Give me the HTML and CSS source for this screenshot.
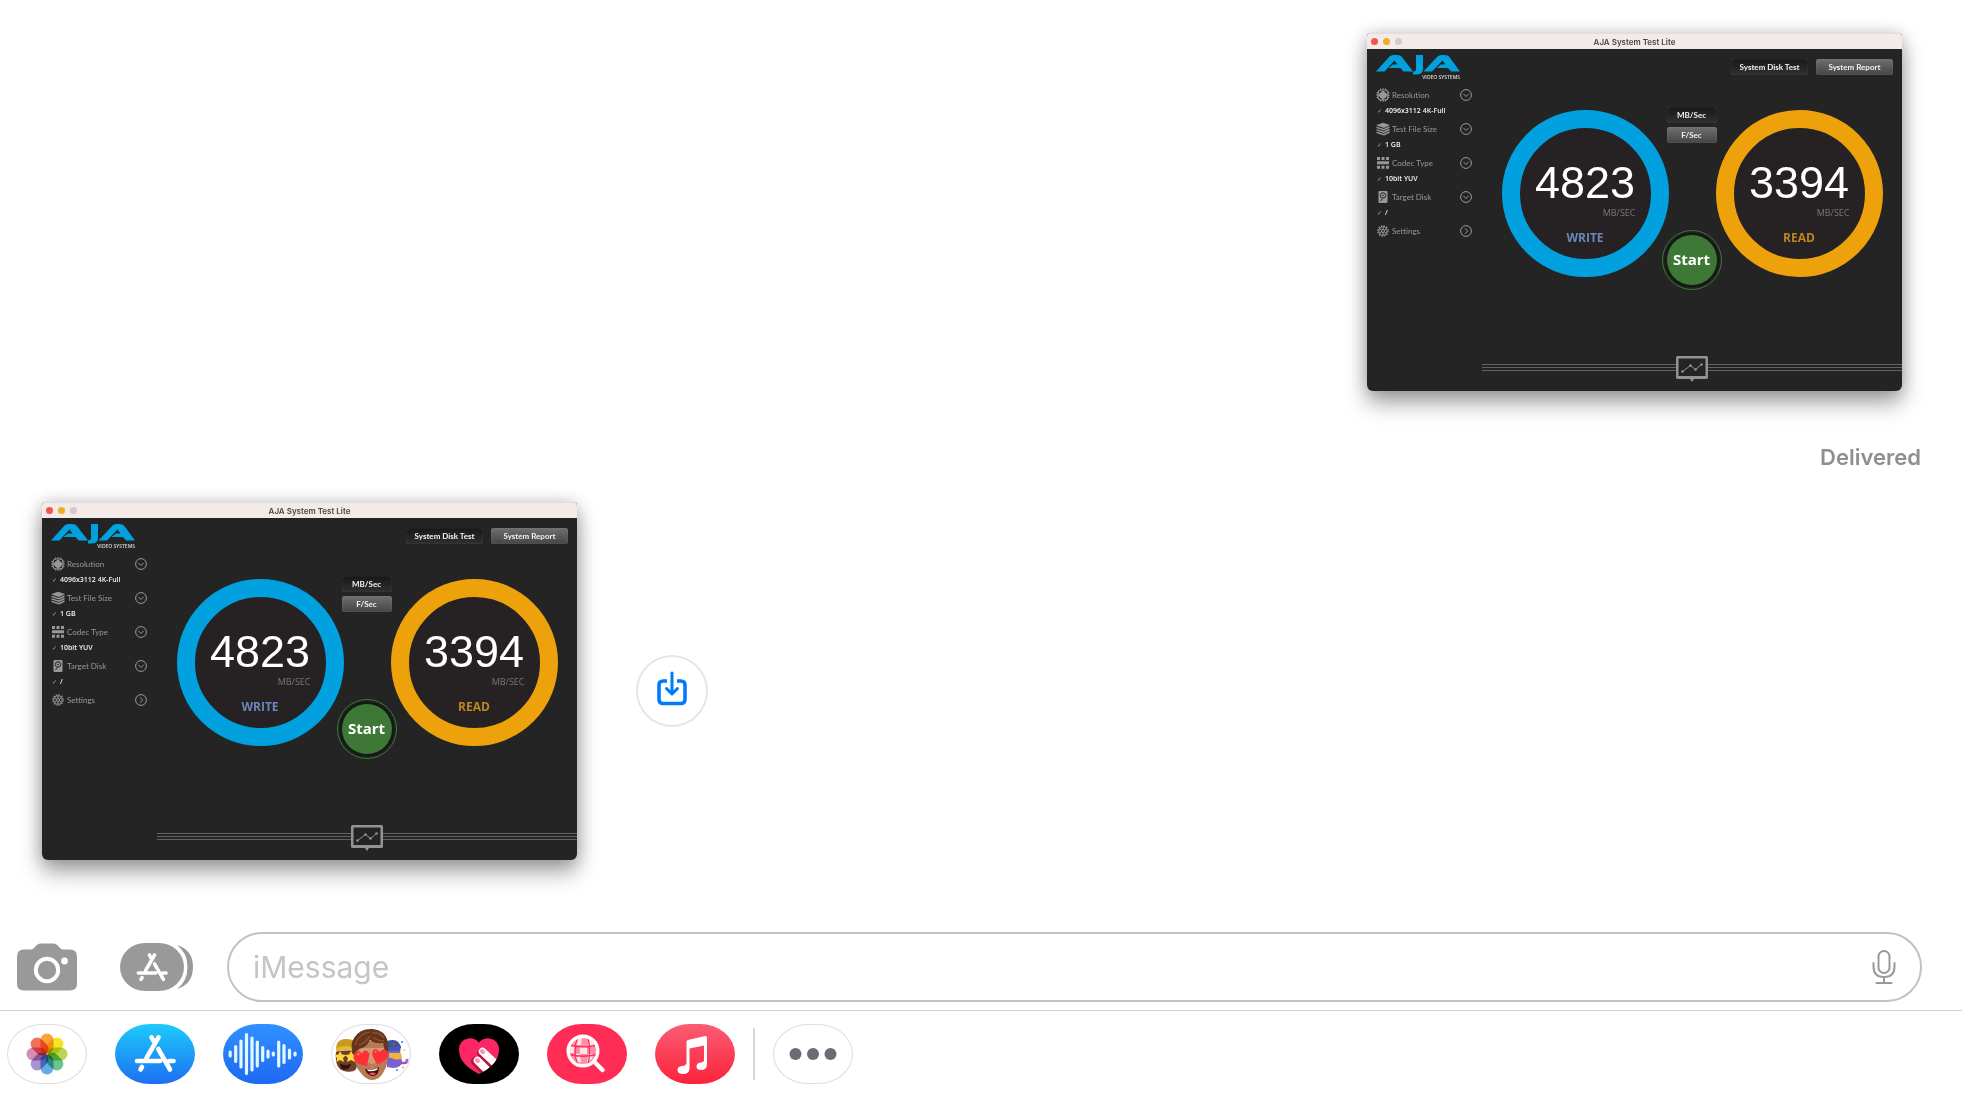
FILE: index.html
```html
<!DOCTYPE html>
<html lang="en">
<head>
<meta charset="utf-8">
<meta name="viewport" content="width=device-width, initial-scale=1">
<title>Messages</title>
<link rel="stylesheet" href="styles.css">
</head>
<body>
<svg class="defs" aria-hidden="true">
  <symbol id="aja" viewBox="0 0 84 20">
    <path d="M0 16.500 13.500 1.500Q15 0 17.500 0H21.500Q24 0 25.500 1.500L37 16.500H27.500L24.500 13H12.500L17 9.500H21.500L18.500 5.500 8.500 16.500ZM40 0H47V14Q47 19.500 40 19.500H37V16.500Q40 16.500 40 14ZM47.500 16.500 61.500 1.500Q63 0 65.500 0H69Q71.500 0 73 1.500L84 16.500H75L72 13H60.500L65 9.500H69.500L66.500 5.500 56 16.500Z"/>
  </symbol>
  <symbol id="down" viewBox="0 0 12 12"><circle cx="6" cy="6" r="5.400"/><path d="M3.300 4.800 6 7.500 8.700 4.800"/></symbol>
  <symbol id="right" viewBox="0 0 12 12"><circle cx="6" cy="6" r="5.400"/><path d="M5 3.300 7.700 6 5 8.700"/></symbol>
  <symbol id="res" viewBox="0 0 14 14"><rect x="2" y="2" width="10" height="10" rx="3" fill="none" stroke="currentColor" stroke-width="1.200"/><path fill="none" stroke="currentColor" stroke-width=".9" d="M4.500 .5V2M7 0V2M9.500 .5V2M4.500 12v1.500M7 12v2M9.500 12v1.500M.5 4.500H2M0 7H2M.5 9.500H2M12 4.500h1.500M12 7h2M12 9.500h1.500"/><path fill="currentColor" d="M5.500 3h3v1.500H10V5.500h1.500v3H10V10H8.500v1.500h-3V10H4V8.500H2.500v-3H4V4.500h1.500Z"/></symbol>
  <symbol id="files" viewBox="0 0 14 14"><path fill="currentColor" d="M7 .8 14 3 8 6 0 3.200Z"/><path fill="none" stroke="currentColor" stroke-width="1.400" d="M.5 5.300 8 7.700 13.500 5M.5 7.800 8 10.200 13.500 7.500M.5 10.300 8 12.700 13.500 10"/></symbol>
  <symbol id="codec" viewBox="0 0 14 14"><path fill="currentColor" d="M1 1h3v3H1zM5.500 1h3v3h-3zM10 1h3v3h-3zM1 5.300h12v3H1zM1 9.800h3v3H1zM5.500 9.800h3v3h-3zM10 9.800h3v3h-3z"/></symbol>
  <symbol id="disk" viewBox="0 0 14 14"><rect x="2.500" y="1" width="9" height="12" rx="1" fill="currentColor"/><circle cx="7" cy="5.500" r="2.700" fill="none" stroke="#242424"/><circle cx="7" cy="5.500" r=".8" fill="#242424"/><path stroke="#242424" d="M6.500 8.500 4.500 11"/></symbol>
  <symbol id="gear" viewBox="0 0 14 14"><g fill="none" stroke="currentColor"><circle cx="7" cy="7" r="5.200" stroke-dasharray="1.500 1.200" stroke-width="1.200"/><circle cx="7" cy="7" r="4.200"/><circle cx="7" cy="7" r="1.500"/><path d="M7 3v2.500M7 8.500V11M3.500 5l2.200 1.200M8.300 7.800l2.200 1.200M10.500 5 8.300 6.200M5.700 7.800 3.500 9"/></g></symbol>
  <symbol id="monitor" viewBox="0 0 32 26"><path fill="#929297" d="M1.500 0h29Q32 0 32 1.500v20Q32 23 30.500 23H18l-2 3-2-3H1.500Q0 23 0 21.500v-20Q0 0 1.500 0Z"/><path fill="#242424" d="M2.500 2.500h27v17.500h-27z"/><path fill="none" stroke="#929297" d="M6.500 15.500 14.500 9.500 19.500 13.500 25.500 8.500"/><g fill="#929297"><circle cx="6.500" cy="15.500" r="1.300"/><circle cx="14.500" cy="9.500" r="1.300"/><circle cx="19.500" cy="13.500" r="1.300"/><circle cx="25.500" cy="8.500" r="1.300"/></g></symbol>
  <symbol id="store" viewBox="19 7 42 42"><g fill="none" stroke="currentColor" stroke-width="4.600" stroke-linecap="round"><path d="M22 36.500H45M54 36.500H58.500M43.500 12.800 31.500 33.500M36.500 12.800 38.500 16.300M43.300 24.500 55 45M27 42.500 25.500 45"/></g></symbol>
</svg>

<main class="thread">
  <div class="message sent">
    <article class="app" aria-label="AJA System Test Lite">
      <header class="titlebar"><i class="dot red"></i><i class="dot amber"></i><i class="dot gray"></i><h2>AJA System Test Lite</h2></header>
      <div class="app-body">
        <aside class="sidebar">
          <div class="brand"><svg class="logo" role="img" aria-label="AJA"><use href="#aja"/></svg><span>VIDEO SYSTEMS</span></div>
          <div class="option"><svg class="glyph"><use href="#res"/></svg><span>Resolution</span><button class="chev" aria-label="Resolution options"><svg><use href="#down"/></svg></button></div>
          <p class="value"><i>✓</i>4096x3112 4K-Full</p>
          <div class="option"><svg class="glyph"><use href="#files"/></svg><span>Test File Size</span><button class="chev" aria-label="Test file size options"><svg><use href="#down"/></svg></button></div>
          <p class="value"><i>✓</i>1 GB</p>
          <div class="option"><svg class="glyph"><use href="#codec"/></svg><span>Codec Type</span><button class="chev" aria-label="Codec type options"><svg><use href="#down"/></svg></button></div>
          <p class="value"><i>✓</i>10bit YUV</p>
          <div class="option"><svg class="glyph"><use href="#disk"/></svg><span>Target Disk</span><button class="chev" aria-label="Target disk options"><svg><use href="#down"/></svg></button></div>
          <p class="value"><i>✓</i>/</p>
          <div class="option"><svg class="glyph"><use href="#gear"/></svg><span>Settings</span><button class="chev" aria-label="Open settings"><svg><use href="#right"/></svg></button></div>
        </aside>
        <section class="panel">
          <div class="toolbar"><button class="tool pressed">System Disk Test</button><button class="tool">System Report</button></div>
          <div class="gauges">
            <div class="gauge write"><strong>4823</strong><span>MB/SEC</span><b>WRITE</b></div>
            <div class="controls"><button class="tool unit pressed">MB/Sec</button><button class="tool unit">F/Sec</button><button class="start"><span>Start</span></button></div>
            <div class="gauge read"><strong>3394</strong><span>MB/SEC</span><b>READ</b></div>
          </div>
          <div class="rail"><svg class="monitor"><use href="#monitor"/></svg></div>
        </section>
      </div>
    </article>
    <p class="status">Delivered</p>
  </div>

  <div class="message received">
    <article class="app" aria-label="AJA System Test Lite">
      <header class="titlebar"><i class="dot red"></i><i class="dot amber"></i><i class="dot gray"></i><h2>AJA System Test Lite</h2></header>
      <div class="app-body">
        <aside class="sidebar">
          <div class="brand"><svg class="logo" role="img" aria-label="AJA"><use href="#aja"/></svg><span>VIDEO SYSTEMS</span></div>
          <div class="option"><svg class="glyph"><use href="#res"/></svg><span>Resolution</span><button class="chev" aria-label="Resolution options"><svg><use href="#down"/></svg></button></div>
          <p class="value"><i>✓</i>4096x3112 4K-Full</p>
          <div class="option"><svg class="glyph"><use href="#files"/></svg><span>Test File Size</span><button class="chev" aria-label="Test file size options"><svg><use href="#down"/></svg></button></div>
          <p class="value"><i>✓</i>1 GB</p>
          <div class="option"><svg class="glyph"><use href="#codec"/></svg><span>Codec Type</span><button class="chev" aria-label="Codec type options"><svg><use href="#down"/></svg></button></div>
          <p class="value"><i>✓</i>10bit YUV</p>
          <div class="option"><svg class="glyph"><use href="#disk"/></svg><span>Target Disk</span><button class="chev" aria-label="Target disk options"><svg><use href="#down"/></svg></button></div>
          <p class="value"><i>✓</i>/</p>
          <div class="option"><svg class="glyph"><use href="#gear"/></svg><span>Settings</span><button class="chev" aria-label="Open settings"><svg><use href="#right"/></svg></button></div>
        </aside>
        <section class="panel">
          <div class="toolbar"><button class="tool pressed">System Disk Test</button><button class="tool">System Report</button></div>
          <div class="gauges">
            <div class="gauge write"><strong>4823</strong><span>MB/SEC</span><b>WRITE</b></div>
            <div class="controls"><button class="tool unit pressed">MB/Sec</button><button class="tool unit">F/Sec</button><button class="start"><span>Start</span></button></div>
            <div class="gauge read"><strong>3394</strong><span>MB/SEC</span><b>READ</b></div>
          </div>
          <div class="rail"><svg class="monitor"><use href="#monitor"/></svg></div>
        </section>
      </div>
    </article>
    <button class="save" aria-label="Save image">
      <svg width="30" height="36" viewBox="0 0 30 36" fill="none" stroke="#007aff" stroke-width="3.600" stroke-linecap="round" stroke-linejoin="round"><path stroke-linecap="butt" d="M10 10H6Q2 10 2 14V28Q2 32.500 6 32.500H24Q28 32.500 28 28V14Q28 10 24 10H20"/><path d="M15 2V22M9.500 17.500 15 23 20.500 17.500" stroke-width="3"/></svg>
    </button>
  </div>
</main>

<form class="composer">
  <button class="plain" type="button" aria-label="Camera">
    <svg width="60" height="48" viewBox="0 0 60 48"><path fill="#999" d="M7 6.500H14Q16 6.500 17.500 4.500L19.500 2.200Q21 .5 23.500 .5H36.500Q39 .5 40.500 2.200L42.500 4.500Q44 6.500 46 6.500H53Q60 6.500 60 13.500V40.500Q60 47.500 53 47.500H7Q0 47.500 0 40.500V13.500Q0 6.500 7 6.500Z"/><circle cx="30" cy="27" r="11.200" fill="none" stroke="#fff" stroke-width="4"/><circle cx="47.500" cy="18" r="3.400" fill="#fff"/></svg>
  </button>
  <button class="plain apps" type="button" aria-label="Apps">
    <svg width="74" height="48" viewBox="0 0 74 48"><path fill="#999" d="M57 2Q73 7 73 24T57 46Q67.500 38 67.500 24T57 2Z"/><rect width="64" height="48" rx="25" ry="24" fill="#999"/><svg x="16" y="7.500" width="32" height="32" color="#fff"><use href="#store"/></svg></svg>
  </button>
  <div class="field">
    <input type="text" placeholder="iMessage" aria-label="iMessage">
    <button class="plain" type="button" aria-label="Dictate">
      <svg width="24" height="36" viewBox="0 0 24 36" fill="none" stroke="#999" stroke-width="2" stroke-linecap="round"><rect x="6.500" y="2" width="11" height="22" rx="5.500"/><path d="M1.500 14V17.500Q1.500 28 12 28T22.500 17.500V14M12 28V34M4.500 34H19.500"/></svg>
    </button>
  </div>
</form>

<nav class="strip" aria-label="iMessage apps">
  <button class="pill outlined" aria-label="Photos"><svg viewBox="0 0 80 60"><g class="petals" transform="translate(40 30)">
    <rect x="-6.500" y="-20.500" width="13" height="20" rx="6.500" fill="#f9a23b"/>
    <rect x="-6.500" y="-20.500" width="13" height="20" rx="6.500" fill="#f4e422" transform="rotate(45)"/>
    <rect x="-6.500" y="-20.500" width="13" height="20" rx="6.500" fill="#b7d850" transform="rotate(90)"/>
    <rect x="-6.500" y="-20.500" width="13" height="20" rx="6.500" fill="#6cc392" transform="rotate(135)"/>
    <rect x="-6.500" y="-20.500" width="13" height="20" rx="6.500" fill="#66ace2" transform="rotate(180)"/>
    <rect x="-6.500" y="-20.500" width="13" height="20" rx="6.500" fill="#a795cf" transform="rotate(225)"/>
    <rect x="-6.500" y="-20.500" width="13" height="20" rx="6.500" fill="#d68cb9" transform="rotate(270)"/>
    <rect x="-6.500" y="-20.500" width="13" height="20" rx="6.500" fill="#f2705c" transform="rotate(315)"/></g></svg></button>
  <button class="pill store" aria-label="App Store"><svg viewBox="0 0 80 60"><svg x="19" y="7.500" width="42" height="42"><use href="#store"/></svg></svg></button>
  <button class="pill audio" aria-label="Audio"><svg viewBox="0 0 80 60"><path fill="none" stroke="#e2f8ff" stroke-width="3.200" stroke-linecap="round" d="M7.200 28v4M12.700 22.500v15M18 17v26M23.500 10.500v39M29 14v32M34.300 18v24M39.700 23.500v13M45 27v6M50.300 29v2M55.700 18v24M61 21.500v17M66.500 26v8M72 29v2"/></svg></button>
  <button class="pill outlined" aria-label="Memoji"><svg viewBox="0 0 80 60">
    <path fill="#6d4027" d="M5 27Q3 46 15 47.500T26 40V26Z"/><path fill="#c99a1c" d="M5 28Q4 15 15 15T26 22V27Q14 23 5 28Z"/><path fill="#e3b83a" d="M5 24Q14 20 25 24V28Q14 24 5 28Z"/>
    <path fill="#ffd93b" d="m9 27 2 3.500 4 .5-3 3 1 4-4-2-3.500 2 .5-4-2.500-3 4-.5Zm11 0 2 3.500 2 .5v7l-4-2-4 2 1-4-3-3 4-.5Z"/><path fill="#311" d="M9 39.500q6 3 11 0-1 6-6 6t-5-6"/>
    <path fill="#7862cf" d="M56 22H70L69 30 71 37Q71 44 62 44L56 43Z"/><path fill="#3157a5" d="M56 24V17Q68 13 70 24Z"/><path fill="#4b55b8" d="M56 23h13v4H56z"/><path fill="#f1b43b" d="M58 29h12l1 5q-5 3-10 0h-3Z"/><path fill="none" stroke="#8c55ce" stroke-width="2.500" d="M66 39h7q4 0 3-4"/><circle cx="75.500" cy="37" r="1.400" fill="#e763b4"/><circle cx="71" cy="18" r="1" fill="#367cff"/><circle cx="73.500" cy="26" r="1" fill="#ffc928"/><circle cx="66" cy="46" r="1" fill="#367cff"/><circle cx="72" cy="43.500" r="1" fill="#ff9b3d"/><circle cx="63" cy="20" r="1.300" fill="#e33"/>
    <path fill="#b87954" d="M24 23Q22 41 29 48 35 56 41 56 48 56 52 49 58 41 57 24L49 17H30Z"/><path fill="#d19b76" d="M28 24H53L51 33 45 40 41 43 37 40 29 35Z"/><path fill="#b87954" d="M37 38q4 4 8 0l-1 4h-6Z"/>
    <path fill="#66361c" d="M23 31Q18 22 23 14 29 4 42 5 54 6 57 18 58 26 56 31 53 26 52 19 44 20 39 16 35 24 28 25 25 27 23 31Z"/><path fill="none" stroke="#935a30" stroke-width="1.200" d="M24 21Q28 9 39 8M28 21q7-2 11-9M42 14q6 3 11 3M41 9q8-1 12 5"/>
    <path fill="#ff2f36" d="M24 29Q28 26 31 29.500 32.500 25.500 36 27 39.500 29 38 33L36 42Q23 39.500 22.500 34 22 31 24 29Z"/><path fill="#ff2f36" d="M55.500 26.500Q52 24 48.500 28 46 24 43 25.500 40 28 42 33L46 40.500Q57 36 57.500 31 57.500 28 55.500 26.500Z"/><path fill="#ff8888" d="m26 30 3-1-2 3Zm18-3 2 0-2 2Z"/>
    <path fill="#4a0d10" d="M34 45Q42 47 48 43 48 52 41.500 52 36 51 34 45Z"/><path fill="#fff" d="M36 45.500Q42 46.500 47 44l-1 2q-5 2-9 1Z"/><path fill="#e65b5b" d="M38 49.500q4-2 7 0-3 3-7 0"/></svg></button>
  <button class="pill touch" aria-label="Digital Touch"><svg viewBox="0 0 80 60"><defs><clipPath id="heart"><path d="M40 18.500Q35 13.500 29.500 14.500 20 16 20 26 20 40 40 50 60 40 60 26 60 16 50.500 14.500 45 13.500 40 18.500Z"/></clipPath><linearGradient id="pink" x2="0" y2="1"><stop stop-color="#ff2469"/><stop offset="1" stop-color="#f72b5b"/></linearGradient></defs><g clip-path="url(#heart)"><path fill="url(#pink)" d="M20 12h40v40H20z"/><path stroke="#b81443" stroke-width="8" stroke-linecap="round" d="M42 29 57 46M36 37 50 53"/><path stroke="#fff" stroke-width="7.600" stroke-linecap="round" d="M43.500 27.500 60 43M38.500 36.500 54 52"/><path stroke="#ff8fb4" stroke-width="4" stroke-linecap="round" d="m43 27 1 1M38 36l1 1"/></g></svg></button>
  <button class="pill images" aria-label="Images"><svg viewBox="0 0 80 60"><circle cx="36" cy="27" r="14" fill="#ff8fa8"/><path fill="#fff" opacity=".75" d="M31 14h4l-1 7h-5ZM41 14l6 5-1 4h-5ZM23 22h5l-1 7h-5ZM33 22h7v8h-7ZM28 30h5l1 8h-4ZM41 30h5l-1 5-5 3Z"/><g fill="none" stroke="#ff2d55" stroke-width="1.300"><path d="M24 21.500Q36 24 48 21.500M22 30.500Q36 34 50 30.500M31 13Q25 27 31 41M41 13Q44 27 41 41"/></g><circle cx="36" cy="27" r="14.800" fill="none" stroke="#fff" stroke-width="3.400"/><path stroke="#fff" stroke-width="4.500" stroke-linecap="round" d="M47.500 38 55.500 46"/></svg></button>
  <button class="pill music" aria-label="Music"><svg viewBox="0 0 80 60"><path fill="#fff" d="M33 16 50 12Q52 11.700 52 13.500V40Q52 46 46 46 41.500 46 41.500 42.500 41.500 39 45.500 38.500 49 38 49 36V21.500L34.500 24.500V44Q34.500 50 28 50 22.500 50 22.500 46 22.500 42.500 27 42 31.500 41.500 31.500 39V18Q31.500 16.400 33 16Z"/></svg></button>
  <span class="divider"></span>
  <button class="pill outlined" aria-label="More"><svg viewBox="0 0 80 60" fill="#6b6b76"><circle cx="22.500" cy="30" r="6"/><circle cx="40" cy="30" r="6"/><circle cx="57.500" cy="30" r="6"/></svg></button>
</nav>
</body>
</html>
```
FILE: styles.css
```css
* { box-sizing: border-box; }
body {
  margin: 0;
  min-height: 100vh;
  display: flex;
  flex-direction: column;
  background: #fff;
  font-family: Inter, "Liberation Sans", sans-serif;
}
button { border: 0; padding: 0; margin: 0; background: none; font: inherit; color: inherit; }
h2, p { margin: 0; }
i { font-style: normal; }
svg { display: block; }
.defs { position: absolute; width: 0; height: 0; }

.thread { flex: 1; display: flex; flex-direction: column; justify-content: flex-end; padding: 33px 41px 72px 42px; gap: 31px; }
.message { display: flex; }
.sent { flex-direction: column; align-items: flex-end; }
.sent .app { margin-right: 19px; }
.status { margin-top: 52px; font-size: 22px; line-height: 28px; font-weight: 600; color: #8e8e93; }
.received { align-items: center; gap: 59px; }
.save { width: 72px; height: 72px; margin-top: 20px; border: 2px solid #e6e6e8; border-radius: 50%; display: grid; place-items: center; padding-bottom: 4px; }

.app {
  width: 535px;
  max-width: 100%;
  height: 358px;
  display: flex;
  flex-direction: column;
  border-radius: 4px 4px 6px 6px;
  overflow: hidden;
  background: #242424;
  box-shadow: 0 12px 22px rgba(0, 0, 0, .36), 0 0 16px rgba(0, 0, 0, .18);
  font-family: Lato, "Open Sans", sans-serif;
}
.titlebar { height: 16px; padding-left: 4px; border-top: 1px solid #e0dfdf; background: #f4ebe9; display: flex; align-items: center; gap: 5px; }
.titlebar h2 { flex: 1; padding-right: 40px; text-align: center; font: 600 8px/14px Inter, sans-serif; color: #4b4646; }
.dot { width: 7px; height: 7px; border-radius: 50%; }
.red { background: #f2564d; }
.amber { background: #efae25; }
.gray { background: #d2cbc9; }
.app-body { flex: 1; display: grid; grid-template-columns: 115px 1fr; }

.sidebar { padding: 6px 10px 0 9px; }
.brand { height: 31px; }
.logo { width: 84px; height: 20px; fill: #00a1de; }
.brand span { display: block; width: 84px; text-align: right; font-family: "Open Sans", sans-serif; font-size: 5px; line-height: 4px; font-weight: 600; color: #ddd; }
.option { display: flex; align-items: center; height: 18px; color: #98989c; font-size: 8px; line-height: 18px; }
.glyph { width: 14px; height: 14px; margin-right: 2px; }
.option span { flex: 1; white-space: nowrap; }
.chev { width: 12px; height: 12px; }
.chev svg { width: 12px; height: 12px; fill: none; stroke: #98989c; stroke-width: 1; }
.value { height: 16px; padding-left: 1px; display: flex; font: 600 7px/14px "Open Sans", sans-serif; color: #f2f2f2; white-space: nowrap; }
.value i { width: 8px; font: 6px/14px "DejaVu Sans", sans-serif; color: #aaa; }

.panel { display: flex; flex-direction: column; }
.toolbar { display: flex; justify-content: flex-end; gap: 8px; padding: 10px 9px 0 0; }
.tool { width: 77px; height: 16px; border-radius: 3px; background: linear-gradient(#707072, #454547); box-shadow: inset 0 0 1px #999; color: #f2f2f2; font-size: 8px; line-height: 16px; font-weight: 700; text-align: center; }
.tool.pressed { background: linear-gradient(#181818, #303030); box-shadow: inset 0 0 1px #666; }
.tool.unit { width: 50px; }
.gauges { display: flex; justify-content: center; align-items: flex-start; margin-top: 32px; }
.gauge { width: 167px; height: 167px; margin-top: 3px; padding: 32px 15px 0; border: 18px solid; border-radius: 50%; background: #262122; display: flex; flex-direction: column; align-items: stretch; }
.write { border-color: #00a1de; }
.read { border-color: #eda20b; }
.gauge strong { font: 400 45px/46px "Liberation Sans", sans-serif; color: #fff; text-align: center; }
.gauge span { margin-top: 1px; font: 9px/12px "Open Sans", sans-serif; color: #77777a; text-align: right; }
.gauge b { margin-top: 12px; font: 700 12px/14px "Open Sans", sans-serif; text-align: center; }
.write b { color: #6c86ba; }
.read b { color: #bb8620; }
.controls { width: 60px; margin: 0 -6px 0 -7px; display: flex; flex-direction: column; align-items: center; gap: 4px; z-index: 1; }
.start { width: 60px; height: 60px; margin-top: 83px; padding: 3px; border: 1px solid #3c7a36; border-radius: 50%; background: #242424; }
.start span { display: block; height: 52px; border-radius: 50%; background: #3d7836; border: 1px solid #171c17; box-shadow: 0 0 2px 1px #101010; color: #fff; font: 700 15px/48px "Open Sans", sans-serif; text-align: center; }
.rail { height: 26px; margin: auto 0 9px; display: flex; justify-content: center; background: linear-gradient(#626264 0 1px, transparent 1px 3px, #626264 3px 4px, transparent 4px 6px, #626264 6px 7px) 0 8px / 100% 7px no-repeat; }
.monitor { width: 32px; height: 26px; }

.plain { flex: none; }
.composer { display: flex; align-items: center; padding: 0 40px 8px 17px; }
.composer .apps { margin: 0 33px 0 43px; }
.field { flex: 1; height: 70px; border: 2px solid #c2c2c5; border-radius: 35px; display: flex; align-items: center; padding: 0 24px; }
.field input { flex: 1; min-width: 0; border: 0; padding: 0; outline: 0; background: none; font: 30px/40px Inter, sans-serif; color: #000; }
.field input::placeholder { color: #c5c5c8; opacity: 1; }

.strip { display: flex; align-items: center; gap: 28px; padding: 13px 7px 14px; border-top: 1px solid #cfcfd1; }
.pill { width: 80px; height: 60px; flex: none; border-radius: 35px / 30px; overflow: hidden; color: #fff; }
.pill svg { overflow: visible; }
.outlined { box-shadow: inset 0 0 0 1px #dededf; }
.petals rect { mix-blend-mode: multiply; }
.store { background: linear-gradient(#1dcbfb, #1d6ff2); }
.audio { background: linear-gradient(#3190ff, #1d69f2); }
.touch { background: #000; }
.images { background: #ff2d55; }
.music { background: linear-gradient(#fb5c74, #fa233b); }
.divider { width: 2px; height: 52px; margin: 0 -10px; background: #d6d6d8; }
```
